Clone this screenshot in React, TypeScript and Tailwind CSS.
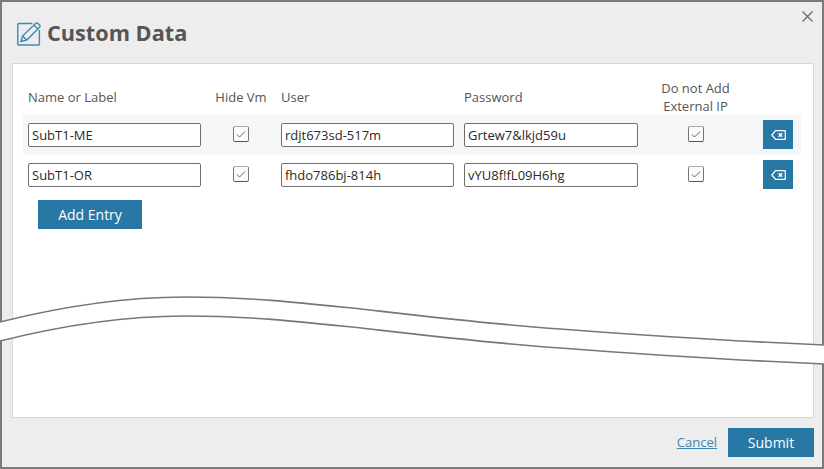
import React from 'react';

const entries = [
  { name: 'SubT1-ME', user: 'rdjt673sd-517m', password: 'Grtew7&lkjd59u', shaded: true },
  { name: 'SubT1-OR', user: 'fhdo786bj-814h', password: 'vYU8f!fL09H6hg', shaded: false },
];

const TextBox: React.FC<{ value: string; className?: string }> = ({ value, className }) => (
  <input
    readOnly
    value={value}
    className={`h-6 border border-[#6f6f6f] rounded-[2px] bg-white px-[3px] text-[13px] text-[#2a2a2a] outline-none ${className ?? ''}`}
  />
);

const Check: React.FC = () => (
  <div className="w-[16px] h-[16px] mb-[2px] border border-[#777] border-t-[#aaa] border-b-[#555] rounded-[2px] bg-[#fbfbfb] flex items-center justify-center">
    <svg width="10" height="8" viewBox="0 0 10 8" fill="none" stroke="#666" strokeWidth="1">
      <path d="M1 4.5l2.5 2.5L9 1.5" />
    </svg>
  </div>
);

const EraseButton: React.FC = () => (
  <button className="w-[30px] h-[29px] mb-[1px] bg-[#2878a6] flex items-center justify-center">
    <svg width="15" height="10" viewBox="0 0 15 10" fill="none" stroke="white" strokeWidth="1.2">
      <path d="M4.5.7h9.8v8.6H4.5L.9 5z" strokeLinejoin="round" />
      <path d="M7.6 3.2l3.6 3.6M11.2 3.2l-3.6 3.6" strokeWidth="1.5" />
    </svg>
  </button>
);

const App: React.FC = () => {
  return (
    <div className="relative w-[824px] h-[469px] border-2 border-[#7a7a7a] bg-[#ededed] flex flex-col font-['Open_Sans',sans-serif] text-[#555]">
      <div className="h-[61px] flex items-center pl-[15px] pt-[2px] relative">
        <svg width="24" height="24" viewBox="0 0 24 24" fill="none" stroke="#3f8ab5" strokeWidth="1.4">
          <path d="M15.5 1.5H1.8a1 1 0 0 0-1 1v19.7a.8.8 0 0 0 .8.8h20a.8.8 0 0 0 .8-.8V8" />
          <path d="M4 19.5l1.5-5.5L18.6 1.5a1.7 1.7 0 0 1 2.4 0l1.5 1.5a1.7 1.7 0 0 1 0 2.4L9.7 18z" />
          <path d="M5.5 14l4.2 4M17 3.2l3.8 3.8" />
        </svg>
        <h1 className="ml-[6px] mb-[2px] text-[21.7px] font-bold text-[#555] leading-none">Custom Data</h1>
        <svg className="absolute right-[9px] top-[9px]" width="11" height="11" viewBox="0 0 11 11" stroke="#666" strokeWidth="1.2">
          <path d="M.5.5l10 10M10.5.5l-10 10" />
        </svg>
      </div>

      <div className="ml-[10px] mr-[8px] h-[355px] bg-white border border-[#d8d8d8] pt-[15px] pl-[10px] pr-[12px]">
        <div className="grid grid-cols-[173px_80px_183px_174px_115px_40px] h-[36px] items-center pl-[5px] text-[13px] leading-[18px]">
          <div>Name or Label</div>
          <div className="text-center">Hide Vm</div>
          <div>User</div>
          <div>Password</div>
          <div className="text-center">Do not Add<br />External IP</div>
          <div />
        </div>
        {entries.map((e) => (
          <div
            key={e.name}
            className={`grid grid-cols-[173px_80px_183px_174px_115px_40px] h-[40px] items-center pl-[5px] ${e.shaded ? 'bg-[#f5f6f8]' : ''}`}
          >
            <TextBox value={e.name} className="w-[173px]" />
            <div className="flex justify-center"><Check /></div>
            <TextBox value={e.user} className="w-[173px]" />
            <TextBox value={e.password} className="w-[174px]" />
            <div className="flex justify-center"><Check /></div>
            <div className="flex justify-end"><EraseButton /></div>
          </div>
        ))}
        <button className="ml-[15px] mt-[5px] w-[104px] h-[29px] bg-[#2878a6] text-white text-[14px] font-medium">
          Add Entry
        </button>
      </div>

      <div className="flex-1 flex items-center justify-end pr-[8px]">
        <a className="text-[13px] text-[#3f86ae] underline mr-[11px]">Cancel</a>
        <button className="w-[86px] h-[29px] bg-[#2878a6] text-white text-[14px] font-medium">Submit</button>
      </div>

      {/* torn page band */}
      <svg className="absolute left-[-2px] top-[-2px]" width="824" height="469" viewBox="0 0 824 469" fill="none">
        <path
          d="M0 322C60 307 120 297 185 297C260 297 320 305 370 310C440 318 500 325 560 329C640 335 730 341 824 345V364C730 360 640 354 560 348C500 344 440 337 370 329C320 324 260 316 185 316C120 316 60 326 0 341Z"
          fill="white"
        />
        <path d="M0 322C60 307 120 297 185 297C260 297 320 305 370 310C440 318 500 325 560 329C640 335 730 341 824 345" stroke="#777" strokeWidth="1.6" />
        <path d="M0 341C60 326 120 316 185 316C260 316 320 324 370 329C440 337 500 344 560 348C640 354 730 360 824 364" stroke="#777" strokeWidth="1.6" />
      </svg>
    </div>
  );
};

export default App;
